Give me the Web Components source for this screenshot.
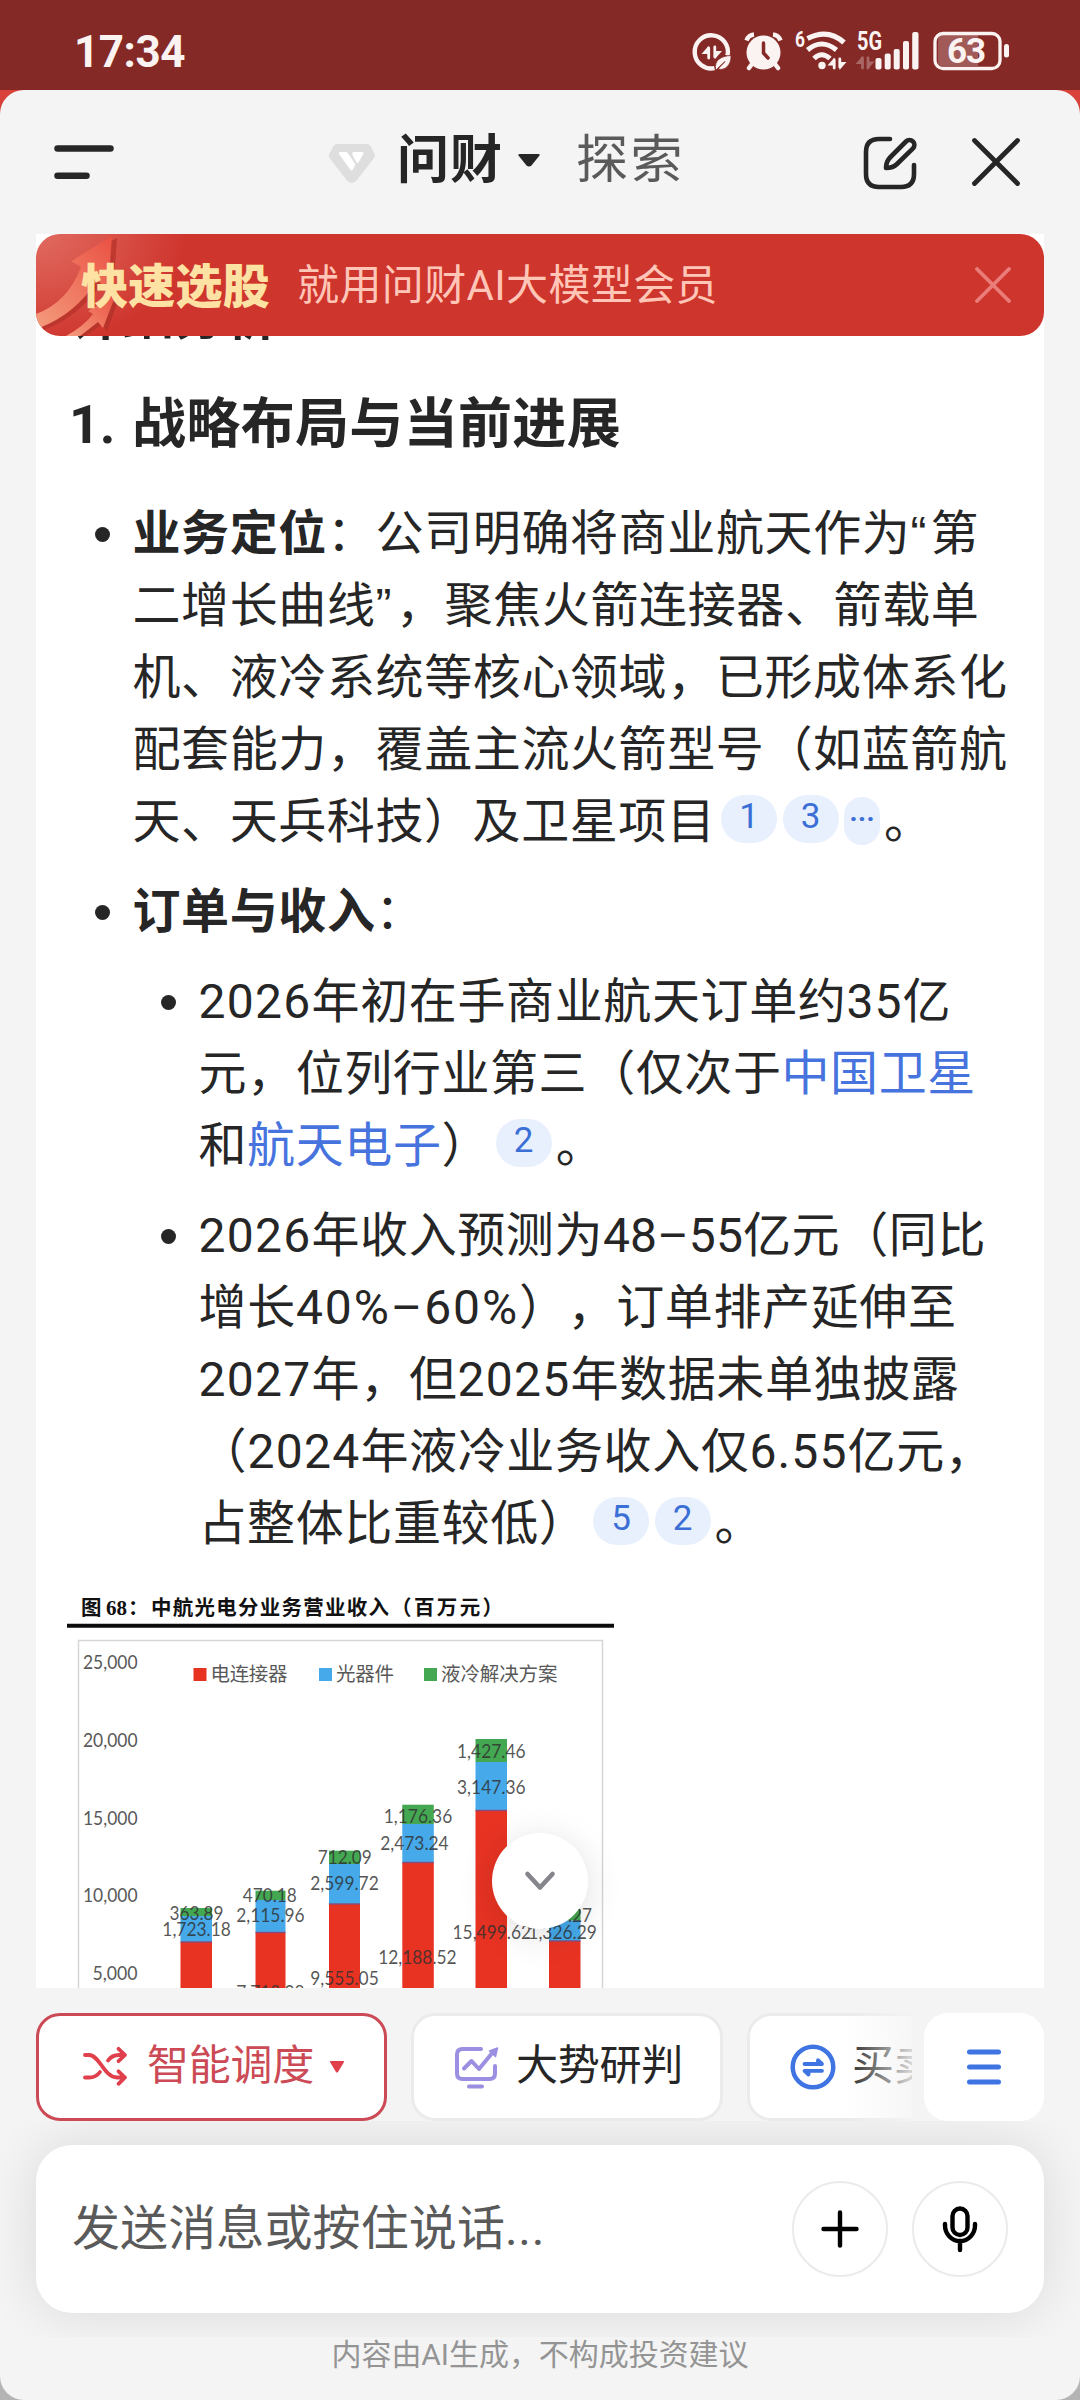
<!DOCTYPE html>
<html lang="zh-CN">
<head>
<meta charset="utf-8">
<title>问财</title>
<style>
html,body{margin:0;padding:0}
body{width:1080px;height:2400px;overflow:hidden;background:linear-gradient(#d8403a 0 1200px,#b4b4b4 1200px);
font-family:Roboto,"Noto Sans CJK SC",sans-serif;color:#262626;text-spacing-trim:space-all}
</style>
</head>
<body>
<app-screen>
  <status-bar slot="status"></status-bar>
  <app-header slot="header"></app-header>
  <answer-view slot="main"></answer-view>
  <action-row slot="actions"></action-row>
  <message-composer slot="composer"></message-composer>
  <fit-run slot="note" w="417">内容由AI生成，不构成投资建议</fit-run>
</app-screen>
<script>
function define(name, html, setup) {
  const t = document.createElement('template');
  t.innerHTML = html;
  customElements.define(name, class extends HTMLElement {
    connectedCallback() {
      if (this.shadowRoot) return;
      this.attachShadow({mode: 'open'}).append(t.content.cloneNode(true));
      if (setup) setup.call(this, this.shadowRoot);
    }
  });
}

define('app-screen', `<style>
:host{display:flex;flex-direction:column;width:1080px;height:2400px}
.sheet{flex:1;display:flex;flex-direction:column;background:#f4f4f4;border-radius:24px;overflow:hidden}
.note{height:63px;display:flex;justify-content:center;font-size:30px;line-height:36px;color:#949494}
</style><slot name="status"></slot><div class="sheet"><slot name="header"></slot><slot name="main"></slot><slot name="actions"></slot><slot name="composer"></slot><div class="note"><slot name="note"></slot></div></div>`);

define('status-bar', `<style>
:host{display:flex;justify-content:space-between;align-items:center;box-sizing:border-box;height:90px;background:#842926;color:#fbf3f2;padding:14px 60px 0 74px}
.t{font-size:44px;font-weight:700;line-height:60px}
svg{display:block;margin-top:-4px}
</style><fit-run class="t" w="111">17:34</fit-run>
<svg width="340" height="60" viewBox="680 20 340 60" fill="none" stroke="#fbf3f2" stroke-linecap="round">
<path d="M727.500 55.500A16.600 16.600 0 1 0 714.500 68.200" stroke-width="4.400" stroke-linecap="butt"/>
<path d="M708.700 58V48M714.800 47V57" stroke-width="2.800"/><path d="M701.500 54L708.500 46V54ZM722 51L715 59V51Z" fill="#fbf3f2" stroke="none"/>
<path d="M715.500 69.500C714 60 721 56 731 55.500C731.500 65 725 71 718 69L725 61.500L716.500 69.500Z" fill="#fbf3f2" stroke="#842926" stroke-width=".8"/>
<circle cx="763.500" cy="52.500" r="17" fill="#fbf3f2" stroke="none"/>
<path d="M746.500 40.500Q748.500 35 754 34.500M780.500 40.500Q778.500 35 773 34.500" stroke-width="4.500" stroke-linecap="butt"/>
<path d="M752 64L749 68M775 64L778 68" stroke-width="4.500"/>
<path d="M763.500 43V53L768 58" stroke="#842926" stroke-width="3.500"/>
<g fill="#fbf3f2" stroke="none" font-family="Roboto" font-weight="700">
<text x="795" y="46.500" font-size="22" textLength="10" lengthAdjust="spacingAndGlyphs">6</text>
<text x="857" y="50" font-size="25" textLength="25" lengthAdjust="spacingAndGlyphs">5G</text></g>
<path d="M807.500 38.500Q828 28 844 42.500" stroke-width="5.200" stroke-linecap="butt"/>
<path d="M807.500 50Q821.500 38 836.500 50M814 58.500Q821.500 51 830 58.500" stroke-width="5"  stroke-linecap="butt"/>
<circle cx="822" cy="65.500" r="3.700" fill="#fbf3f2" stroke="none"/>
<path d="M827.500 65.500L834.500 57.500V65.500ZM846.500 62L839.500 70V62Z" fill="#fbf3f2" stroke="none"/><path d="M834.200 60V68M839.800 59V67" stroke-width="2.800"/>
<g opacity=".3"><path d="M855.500 64L862.500 56V64ZM874.500 61.500L867.500 69.500V61.500Z" fill="#fbf3f2" stroke="none"/><path d="M862.500 58V68M868 58V68" stroke-width="2.800"/></g>
<g fill="#fbf3f2" stroke="none"><rect x="875.500" y="58" width="6" height="11.500" rx="2"/><rect x="884.700" y="53.500" width="6" height="16" rx="2"/><rect x="893.700" y="49" width="6" height="20.500" rx="2"/><rect x="903" y="41" width="6" height="28.500" rx="2"/><rect x="912.200" y="32" width="6.300" height="37.500" rx="2"/>
<path d="M942 35H978V66H942Q938 66 938 62V39Q938 35 942 35Z" fill="#a15a57"/>
<rect x="1004" y="44" width="5" height="13.500" rx="2.500"/>
<text x="947" y="63" font-family="Roboto" font-weight="700" font-size="35" textLength="39">63</text></g>
<rect x="935" y="33.500" width="65" height="35" rx="8" stroke-width="3.300"/>
</svg>`);

define('app-header', `<style>
:host{display:flex;height:144px;box-sizing:border-box;align-items:flex-start;padding:38px 54px 0 54px}
svg{display:block;flex:none}
.m{width:60px;margin-top:17px;margin-right:214px}
.l{margin-top:15px;margin-right:21px}
.a,.b{font-size:52px;line-height:60px;height:60px;margin-top:3px}
.a{font-weight:700;margin-right:14px}.b{color:#5a5a5a;margin-left:35px;font-weight:400}
.c{margin-top:25px}
.e{margin-left:auto;margin-top:6.500px;margin-right:52px}.x{margin-top:7.500px;margin-right:4.500px}
</style>
<svg class="m" width="60" height="36" viewBox="0 0 60 36" stroke="#262626" stroke-width="6.500" stroke-linecap="round"><path d="M3.500 3.500H56.500M3.500 30.800H32.500"/></svg>
<svg class="l" width="48" height="41" viewBox="0 0 48 41"><path d="M9 1H39Q41 1 42 2.600L46.500 10.500Q47.800 12.800 46 15L29 37Q26.500 40 23.800 40T18.500 37L1.600 15Q0 12.800 1.400 10.500L6 2.600Q7 1 9 1Z" fill="#dedede"/><path d="M12 9H17.500Q19 9 20 10.300L27.500 21.500L24.500 27Q23.500 28.500 22.500 27L11 11Q10 9 12 9ZM26 9H34Q36.500 9 35 11.500L30.500 19.500Q29.500 21 28.500 19.500L24.500 12Q23.500 9 26 9Z" fill="#fff"/></svg>
<fit-run class="a" w="106">问财</fit-run>
<svg class="c" width="24" height="16" viewBox="0 0 24 16"><path d="M2.500 1H21.500Q23.500 1 22.300 2.800L14.500 12.500Q12 14.500 9.500 12.500L1.700 2.800Q.5 1 2.500 1Z" fill="#262626"/></svg>
<fit-run class="b" w="109">探索</fit-run>
<svg class="e" width="56" height="56" viewBox="0 0 56 56" fill="none" stroke="#262626" stroke-width="4.600" stroke-linecap="round" stroke-linejoin="round"><path d="M28 4H17Q4 4 4 17V39Q4 52 17 52H39Q52 52 52 39V30"/><path d="M24 33C24 29 25.500 25 28.500 22L44 6.500A4.800 4.800 0 0 1 51 13.300L35 29Q31 33 24 33Z"/></svg>
<svg class="x" width="52" height="52" viewBox="0 0 52 52" stroke="#262626" stroke-width="4.800" stroke-linecap="round"><path d="M4.500 4.500L47.500 47.500M47.500 4.500L4.500 47.500"/></svg>`);

define('promo-banner', `<style>
:host{display:flex;position:relative;align-items:center;box-sizing:border-box;height:102px;border-radius:24px;overflow:hidden;padding:0 33px 0 45px;background:radial-gradient(ellipse 150px 110px at 0 0,#e06a60,rgba(222,95,85,.75) 45%,rgba(206,53,45,0)),#ce352d}
.art{position:absolute;left:0;top:0}
.t{position:relative;font-size:47px;font-weight:900;line-height:70px;margin-top:-4px;font-family:"Noto Sans CJK SC",sans-serif;margin-right:27px;color:#fde2a4}
.s{font-size:42px;line-height:60px;color:#ffc6b8;font-weight:400;margin-top:2px}
.x{margin-left:auto;display:block}
</style>
<svg class="art" width="110" height="102" viewBox="0 0 110 102"><defs><linearGradient id="g" x1="0" y1="1" x2="1" y2="0"><stop offset="0" stop-color="#f49b7d"/><stop offset="1" stop-color="#ea5143"/></linearGradient></defs>
<path d="M81 4L77 59L66 49Q44 82 8 96L0 84Q34 72 48 34L36 26Z" fill="#b8332a" opacity=".8"/>
<path d="M76 2L72 56L61 46Q40 80 3 94L0 92V80Q32 68 45 33L35 27Z" fill="url(#g)"/>
<path d="M84 62L71 97L66 90L50 102H36Q52 93 60 82L55 79Z" fill="#b8332a"/><path d="M80 60L67 94L62 88L44 102H30Q48 92 57 80L52 77Z" fill="url(#g)"/></svg>
<fit-run class="t" w="189">快速选股</fit-run>
<fit-run class="s" w="421">就用问财AI大模型会员</fit-run>
<svg class="x" width="36" height="36" viewBox="0 0 36 36" stroke="#ea7d79" stroke-width="3.800" stroke-linecap="round"><path d="M2 2L34 34M34 2L2 34"/></svg>`);

define('ref-chip', `<style>
:host{display:inline-flex;justify-content:center;align-items:center;width:56px;height:48px;border-radius:24px;background:#e8f0fd;color:#3c6fd6;font-size:35px;line-height:44px;margin-left:5.500px;position:relative;top:-19px;vertical-align:-9px;box-sizing:border-box}
:host([small]){width:36px;border-radius:18px;font-weight:700;font-size:28px}
i{font-style:normal;margin-top:-4px}
</style><i><slot></slot></i>`);

define('stock-link', `<style>:host{color:#4673dd}</style><slot></slot>`);

define('bullet-item', `<style>
:host{display:flex;align-items:flex-start}
.d{flex:none;width:15px;height:15px;border-radius:50%;background:#262626;margin:29px 22.500px 0 0}
.body{font-size:48px;line-height:72px}
::slotted(div){height:72px;white-space:nowrap}
</style><span class="d"></span><div class="body"><slot></slot></div>`);

define('revenue-chart', `<style>:host{display:block}svg{display:block}
.k{font-family:Lato,"Noto Sans CJK SC",sans-serif;fill:#595959}.v{font-family:Lato,sans-serif;font-size:19.500px;fill:#303030;fill-opacity:.82;text-anchor:middle}</style>
<svg width="1008" height="428" viewBox="36 1560 1008 428"></svg>`,
function (root) {
  let s = `<g font-family="'Liberation Serif','Noto Sans CJK SC',serif" font-weight="700" font-size="20.500" fill="#111"><text x="81" y="1615">图</text><text x="106" y="1615" font-size="22" textLength="21" lengthAdjust="spacingAndGlyphs">68</text><text x="128" y="1615">：</text><text x="151" y="1615" textLength="238">中航光电分业务营业收入</text><text x="391" y="1615" textLength="112">（百万元）</text></g>
<path d="M67 1625.800H614" stroke="#0c0c0c" stroke-width="4"/>
<path d="M78.500 1988V1640.500H602.500V1988" fill="none" stroke="#d6d6d6" stroke-width="1.500"/>`;
  [['25,000',1662],['20,000',1740],['15,000',1818],['10,000',1895.5],['5,000',1973.5]].forEach(([t,y]) => {
    const w = t.length > 5 ? 54.5 : 45;
    s += `<text class="k" font-size="19.500" x="${137.5-w}" y="${y+6.8}" textLength="${w}" lengthAdjust="spacingAndGlyphs">${t}</text>`;
  });
  [[193.5,'#e83323','电连接器',77],[319,'#45a9ea','光器件',58],[424,'#44a852','液冷解决方案',116.5]].forEach(([x,c,t,w]) => {
    s += `<rect x="${x}" y="1668" width="13" height="13" fill="${c}"/><text class="k" x="${x+17}" y="1680.500" font-size="19.500" textLength="${w}">${t}</text>`;
  });
  [[180.5,31.5,1908,1916,1942],[255.5,30,1890.7,1900,1932.5],[329,31,1850.7,1864,1904],[402.3,31.5,1804.7,1824,1862.5],[475.5,31.5,1739,1762,1810.5],[549,31.5,1909,1920.5,1941]].forEach(([x,w,g,b,r]) => {
    s += `<rect x="${x}" y="${g}" width="${w}" height="${b-g}" fill="#44a852"/><rect x="${x}" y="${b}" width="${w}" height="${r-b}" fill="#45a9ea"/><rect x="${x}" y="${r}" width="${w}" height="${1988-r}" fill="#e83323"/><rect x="${x}" y="${r-.7}" width="${w}" height="1.400" fill="#8a4a78"/>`;
  });
  [['363.89',196.6,1913],['1,723.18',196.6,1929],['470.18',269.7,1895],['2,115.96',270.4,1915],['7,718.98',270.4,1992],['712.09',344.7,1857],['2,599.72',344.5,1883],['9,555.05',344.5,1977.7],['1,176.36',418,1816],['2,473.24',414.4,1843],['12,188.52',417.4,1957],['1,427.46',491.3,1751],['3,147.36',491.3,1787],['15,499.62',491.8,1932],['1,326.29',562.6,1932],['.27',580,1915]].forEach(([t,x,y]) => {
    const w = {3:24,6:54,8:68.5,9:78.5}[t.length];
    s += `<text class="v" x="${x}" y="${y+6.8}" textLength="${w}" lengthAdjust="spacingAndGlyphs">${t}</text>`;
  });
  root.querySelector('svg').innerHTML = s;
});

define('answer-view', `<style>
:host{display:block;position:relative;height:1754px;margin:0 36px;background:#fff;overflow:hidden;flex:none}
promo-banner{position:absolute;left:0;top:0;width:1008px}
article{padding-top:48px}
h2,h3{margin:0 0 0 35px;font-weight:700;line-height:72px;height:72px;white-space:nowrap}
h2{font-size:51px}h3{font-size:54px;margin:35px 0 37px 33px}
.n{margin-right:17px}
.l1{margin-left:59px}.l2{margin-left:125px}
bullet-item{margin-bottom:18px}
bullet-item.last{margin-bottom:0}
b{font-weight:700}
.stop{margin-left:4px}
.q{font-family:"Liberation Sans",sans-serif;line-height:60px}
.down{position:absolute;left:456px;top:1599px;width:96px;height:96px;border-radius:50%;background:#fff;box-shadow:0 6px 36px rgba(0,0,0,.13);display:flex;align-items:center;justify-content:center}
</style>
<article>
<h2><fit-run w="206">详细分析</fit-run></h2>
<h3><fit-run class="n" w="46">1.</fit-run><fit-run w="489">战略布局与当前进展</fit-run></h3>
<bullet-item class="l1">
<div><b><fit-run w="194.500">业务定位</fit-run></b><fit-run w="583.500">：公司明确将商业航天作为</fit-run><fit-run class="q" w="20">“</fit-run><fit-run w="48.500">第</fit-run></div>
<div><fit-run w="243">二增长曲线</fit-run><fit-run class="q" w="20.500">”</fit-run><fit-run w="583.500">，聚焦火箭连接器、箭载单</fit-run></div>
<div><fit-run w="875">机、液冷系统等核心领域，已形成体系化</fit-run></div>
<div><fit-run w="875">配套能力，覆盖主流火箭型号（如蓝箭航</fit-run></div>
<div><fit-run w="583">天、天兵科技）及卫星项目</fit-run><ref-chip>1</ref-chip><ref-chip>3</ref-chip><ref-chip small>···</ref-chip><fit-run class="stop" w="48">。</fit-run></div>
</bullet-item>
<bullet-item class="l1"><div><b><fit-run w="243">订单与收入</fit-run></b><fit-run w="48">：</fit-run></div></bullet-item>
<bullet-item class="l2">
<div><fit-run w="113">2026</fit-run><fit-run w="535">年初在手商业航天订单约</fit-run><fit-run w="56">35</fit-run><fit-run w="48">亿</fit-run></div>
<div><fit-run w="583">元，位列行业第三（仅次于</fit-run><stock-link><fit-run w="194.500">中国卫星</fit-run></stock-link></div>
<div><fit-run w="48.600">和</fit-run><stock-link><fit-run w="194.500">航天电子</fit-run></stock-link><fit-run w="48.600">）</fit-run><ref-chip>2</ref-chip><fit-run class="stop" w="48">。</fit-run></div>
</bullet-item>
<bullet-item class="l2 last">
<div><fit-run w="113">2026</fit-run><fit-run w="291.500">年收入预测为</fit-run><fit-run w="140">48–55</fit-run><fit-run w="243">亿元（同比</fit-run></div>
<div><fit-run w="97.500">增长</fit-run><fit-run w="223">40%–60%</fit-run><fit-run w="437.500">），订单排产延伸至</fit-run></div>
<div><fit-run w="113">2027</fit-run><fit-run w="146">年，但</fit-run><fit-run w="113">2025</fit-run><fit-run w="389">年数据未单独披露</fit-run></div>
<div><fit-run w="49">（</fit-run><fit-run w="113">2024</fit-run><fit-run w="389">年液冷业务收入仅</fit-run><fit-run w="98">6.55</fit-run><fit-run w="146">亿元，</fit-run></div>
<div><fit-run w="389">占整体比重较低）</fit-run><ref-chip>5</ref-chip><ref-chip>2</ref-chip><fit-run class="stop" w="48">。</fit-run></div>
</bullet-item>
<revenue-chart></revenue-chart>
</article>
<promo-banner></promo-banner>
<div class="down"><svg width="34" height="22" viewBox="0 0 34 22" fill="none" stroke="#85858c" stroke-width="4.600" stroke-linecap="round" stroke-linejoin="round"><path d="M4.500 4L17 17.500L29.500 4"/></svg></div>`);

define('action-chip', `<style>
:host{display:flex;flex:none;align-items:center;box-sizing:border-box;height:108px;border:3px solid #ebebeb;border-radius:24px;background:#fff;font-size:42px;line-height:60px;color:#262626}
:host([active]){border-color:#cb4a55;color:#cb4a55}
</style><slot></slot>`);

define('action-row', `<style>
:host{display:flex;flex:none;height:133px;box-sizing:border-box;padding:25px 36px 0}
svg{display:block;flex:none}
.strip{display:flex;gap:24px;width:876px;overflow:hidden;position:relative}
.fade{position:absolute;right:0;top:0;width:66px;height:108px;background:linear-gradient(90deg,rgba(245,245,245,0),rgba(245,245,245,.85))}
.menu{width:120px;height:108px;border-radius:24px;background:#fff;margin-left:12px;display:flex;align-items:center;justify-content:center}
.one{width:351px;padding-left:43px}.two{width:312px;padding-left:40px}.three{width:312px;padding-left:40px}
fit-run{margin-bottom:2px}
</style>
<div class="strip">
<action-chip class="one" active>
<svg width="46" height="42" viewBox="0 0 46 42" fill="none" stroke="#e03f4c" stroke-width="3.800" stroke-linecap="round" stroke-linejoin="round"><path d="M3 9H7C18 9 22 31.500 35 31.500H43M3 31.500H7Q14 31.500 18 26M26 14.500Q30 9 37 9H43M36.500 2.800L43 9L36.500 15.200M36.500 25.300L43 31.500L36.500 37.800"/></svg>
<fit-run w="167" style="margin-left:19px">智能调度</fit-run>
<svg width="16" height="14" viewBox="0 0 16 14" style="margin-left:15px"><path d="M1.500 1H14.500Q15.500 1 15 2L9 12Q8 13 7 12L1 2Q.5 1 1.500 1Z" fill="#e03f4c"/></svg>
</action-chip>
<action-chip class="two">
<svg width="46" height="44" viewBox="0 0 46 44" fill="none" stroke="#9a8fe0" stroke-width="4" stroke-linecap="round" stroke-linejoin="round"><path d="M27 4H8.500Q3 4 3 9.500V28.500Q3 34 8.500 34H35.500Q41 34 41 28.500V21M15 41.500H28M10 23.500L17.500 16L25 24L39 7"/><path d="M43.500 3L41.500 11.500L35.500 6Z" fill="#9a8fe0" stroke-width="1.500"/></svg>
<fit-run w="167" style="margin-left:16px">大势研判</fit-run>
</action-chip>
<action-chip class="three">
<svg width="46" height="46" viewBox="0 0 46 46" fill="none" stroke="#3f75e2" stroke-linecap="round" stroke-linejoin="round"><circle cx="23" cy="23" r="20.300" stroke-width="4.500"/><path d="M14.500 20H32L28 16.200V20M32 26.800H14.500L18.500 30.500V26.800" stroke-width="3.800"/></svg>
<fit-run w="84" style="margin-left:16px">买卖</fit-run>
</action-chip>
<div class="fade"></div>
</div>
<div class="menu"><svg width="36" height="38" viewBox="0 0 36 38" stroke="#3f75e2" stroke-width="5" stroke-linecap="round"><path d="M3.500 4H32.500M3.500 19H32.500M3.500 34H32.500"/></svg></div>`);

define('round-button', `<style>:host{display:flex;align-items:center;justify-content:center;box-sizing:border-box;width:96px;height:96px;border:2.500px solid #ebebeb;border-radius:50%;flex:none}</style><slot></slot>`);

define('message-composer', `<style>
:host{display:block;flex:none;height:216px;box-sizing:border-box;padding:24px 36px;overflow:hidden}
.card{display:flex;align-items:center;gap:24px;height:168px;box-sizing:border-box;padding:0 36px;background:#fff;border-radius:36px;box-shadow:0 0 54px rgba(0,0,0,.11)}
.ph{font-size:48px;line-height:70px;color:#5a5a5a;margin-right:auto;display:flex}
svg{display:block}
</style>
<div class="card"><div class="ph"><fit-run w="433">发送消息或按住说话</fit-run><fit-run w="40">...</fit-run></div>
<round-button><svg width="40" height="40" viewBox="0 0 40 40" stroke="#000" stroke-width="4.400" stroke-linecap="round"><path d="M3.500 20H36.500M20 3.500V36.500"/></svg></round-button>
<round-button><svg width="40" height="48" viewBox="0 0 40 48" fill="none" stroke="#000" stroke-width="4.400" stroke-linecap="round"><rect x="12.500" y="3.500" width="15" height="26.500" rx="7.500"/><path d="M5 19V20.500A15 15.500 0 0 0 35 20.500V19M20 36V45"/></svg></round-button>
</div>`);

/* Text run whose tracking is tuned so that it fills the width given in "w".
   Registered last: it measures itself inside the finished shadow trees. */
define('fit-run', `<style>:host{display:inline-block;white-space:nowrap;vertical-align:baseline}span{display:inline-block}</style><span><slot></slot></span>`,
function (root) {
  const w = parseFloat(this.getAttribute('w'));
  const n = [...this.textContent].length;
  this.style.width = w + 'px';
  const s = root.querySelector('span');
  s.style.letterSpacing = ((w - s.getBoundingClientRect().width) / n) + 'px';
});
</script>
</body>
</html>
